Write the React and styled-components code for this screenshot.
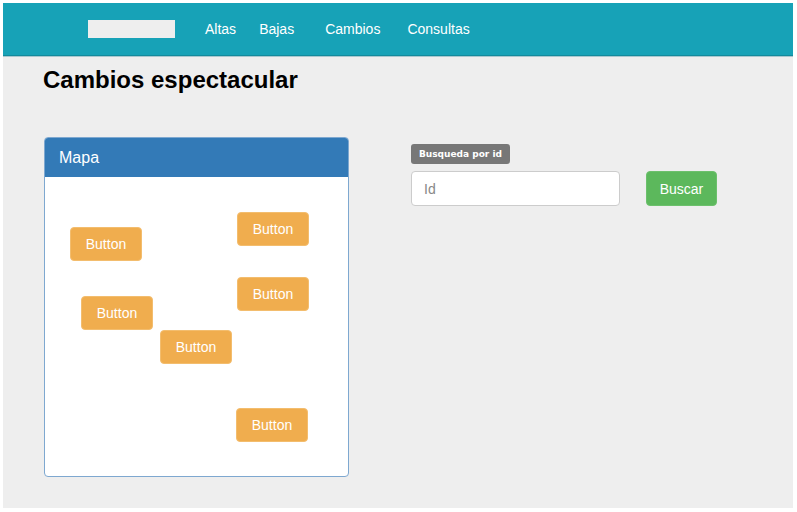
import React from "react";
import styled, { createGlobalStyle } from "styled-components";

const Global = createGlobalStyle`
  html, body { margin: 0; padding: 0; background: #fff; }
  body { padding: 3px 0 0 3px; font-family: "Liberation Sans", Arial, sans-serif; }
  * { box-sizing: border-box; }
`;

const Frame = styled.div`
  width: 790px;
  height: 505px;
  background: #eeeeee;
  display: flex;
  flex-direction: column;
`;

const NavBar = styled.nav`
  height: 53px;
  background: #17a2b7;
  border-bottom: 1px solid #138a9c;
  box-shadow: 0 1px 0 #a9c8cf;
  display: flex;
  align-items: center;
  padding-left: 85px;
`;

const Logo = styled.div`
  width: 87px;
  height: 18px;
  background: #eeeeee;
  margin-right: 30px;
`;

const NavLink = styled.a`
  color: #fff;
  font-size: 14px;
  text-decoration: none;
  margin-right: ${(p) => p.$gap}px;
`;

const Main = styled.main`
  padding: 11px 0 0 40px;
  display: flex;
  flex-direction: column;
`;

const Title = styled.h1`
  margin: 0;
  font-size: 24px;
  font-weight: bold;
  color: #000;
  line-height: 26px;
`;

const Row = styled.div`
  display: flex;
  margin-top: 44px;
`;

const Panel = styled.section`
  width: 305px;
  height: 340px;
  margin-left: 1px;
  border: 1px solid #7ea8d0;
  border-radius: 4px;
  background: #fff;
  display: flex;
  flex-direction: column;
  overflow: hidden;
`;

const PanelHeading = styled.div`
  height: 39px;
  background: #337ab7;
  color: #fff;
  font-size: 16px;
  display: flex;
  align-items: center;
  padding-left: 14px;
`;

const MapCanvas = styled.div`
  position: relative;
  flex: 1;
`;

const MapButton = styled.button`
  position: absolute;
  width: 72px;
  height: 34px;
  background: #f0ad4e;
  border: 1px solid #f3bd6e;
  border-radius: 4px;
  color: #fff;
  font-family: "Liberation Sans", Arial, sans-serif;
  font-size: 14px;
  padding: 0;
`;

const Search = styled.div`
  margin-left: 62px;
  margin-top: 7px;
  display: flex;
  flex-direction: column;
  align-items: flex-start;
`;

const Badge = styled.span`
  background: #777;
  color: #fff;
  font-family: "DejaVu Sans", Verdana, sans-serif;
  font-size: 9px;
  font-weight: bold;
  border-radius: 3px;
  padding: 0 8px;
  height: 20px;
  line-height: 20px;
`;

const SearchRow = styled.div`
  display: flex;
  align-items: center;
  margin-top: 7px;
`;

const Input = styled.input`
  width: 209px;
  height: 35px;
  border: 1px solid #ccc;
  border-radius: 4px;
  padding: 0 12px;
  font-family: "Liberation Sans", Arial, sans-serif;
  font-size: 14px;
  color: #555;
  background: #fff;
  &::placeholder { color: #888; }
`;

const GreenButton = styled.button`
  margin-left: 26px;
  width: 71px;
  height: 35px;
  background: #5cb85c;
  border: 1px solid #6cc06c;
  border-radius: 4px;
  color: #fff;
  font-family: "Liberation Sans", Arial, sans-serif;
  font-size: 14px;
`;

const buttons = [
  { x: 25, y: 50 },
  { x: 192, y: 35 },
  { x: 192, y: 100 },
  { x: 36, y: 119 },
  { x: 115, y: 153 },
  { x: 191, y: 231 },
];

export default function App() {
  return (
    <>
      <Global />
      <Frame>
        <NavBar>
          <Logo />
          <NavLink href="#" $gap={23}>Altas</NavLink>
          <NavLink href="#" $gap={31}>Bajas</NavLink>
          <NavLink href="#" $gap={27}>Cambios</NavLink>
          <NavLink href="#" $gap={0}>Consultas</NavLink>
        </NavBar>
        <Main>
          <Title>Cambios espectacular</Title>
          <Row>
            <Panel>
              <PanelHeading>Mapa</PanelHeading>
              <MapCanvas>
                {buttons.map((b, i) => (
                  <MapButton key={i} style={{ left: b.x, top: b.y }}>
                    Button
                  </MapButton>
                ))}
              </MapCanvas>
            </Panel>
            <Search>
              <Badge>Busqueda por id</Badge>
              <SearchRow>
                <Input placeholder="Id" />
                <GreenButton>Buscar</GreenButton>
              </SearchRow>
            </Search>
          </Row>
        </Main>
      </Frame>
    </>
  );
}
